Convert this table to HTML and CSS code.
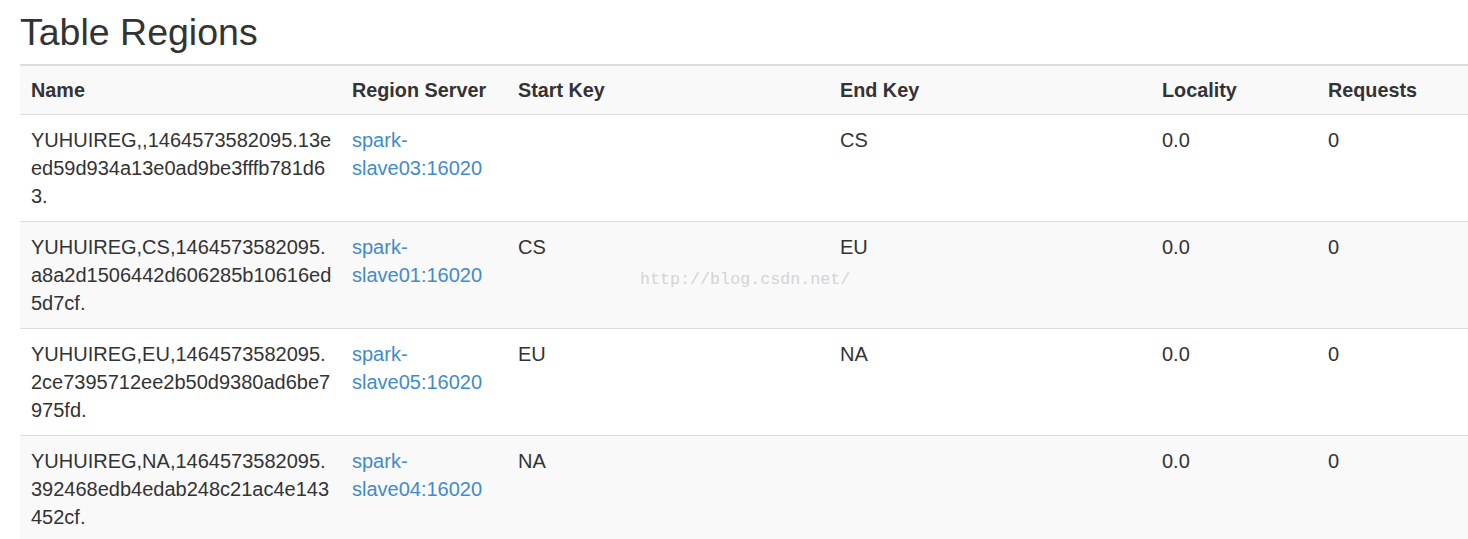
FILE: index.html
```html
<!DOCTYPE html>
<html>
<head>
<meta charset="utf-8">
<title>Table Regions</title>
<link rel="stylesheet" href="styles.css">
</head>
<body>
<div class="page">
  <h1 class="title">Table Regions</h1>
  <table class="regions">
    <colgroup>
      <col class="c-name"><col class="c-rs"><col class="c-key"><col class="c-key"><col class="c-loc"><col class="c-req">
    </colgroup>
    <tr class="head">
      <th>Name</th><th>Region Server</th><th>Start Key</th><th>End Key</th><th>Locality</th><th>Requests</th>
    </tr>
    <tr>
      <td class="name">YUHUIREG,,1464573582095.13e<br>ed59d934a13e0ad9be3fffb781d6<br>3.</td>
      <td><a href="#">spark-slave03:16020</a></td>
      <td></td><td>CS</td><td>0.0</td><td>0</td>
    </tr>
    <tr>
      <td class="name">YUHUIREG,CS,1464573582095.<br>a8a2d1506442d606285b10616ed<br>5d7cf.</td>
      <td><a href="#">spark-slave01:16020</a></td>
      <td>CS</td><td>EU</td><td>0.0</td><td>0</td>
    </tr>
    <tr>
      <td class="name">YUHUIREG,EU,1464573582095.<br>2ce7395712ee2b50d9380ad6be7<br>975fd.</td>
      <td><a href="#">spark-slave05:16020</a></td>
      <td>EU</td><td>NA</td><td>0.0</td><td>0</td>
    </tr>
    <tr>
      <td class="name">YUHUIREG,NA,1464573582095.<br>392468edb4edab248c21ac4e143<br>452cf.</td>
      <td><a href="#">spark-slave04:16020</a></td>
      <td>NA</td><td></td><td>0.0</td><td>0</td>
    </tr>
  </table>
  <div class="watermark">http://blog.csdn.net/</div>
</div>
</body>
</html>
```

FILE: styles.css
```css
html, body {
  margin: 0;
  padding: 0;
  background: #fff;
}
body {
  font-family: "Liberation Sans", Arial, sans-serif;
  color: #333;
  font-size: 20px;
  line-height: 28px;
  overflow: hidden;
}
.page {
  position: relative;
  padding: 12px 0 0 20px;
}
.title {
  margin: 0 0 12px 0;
  font-size: 37.5px;
  line-height: 40px;
  font-weight: 500;
  color: #333;
}
.regions {
  width: 1448px;
  table-layout: fixed;
  border-collapse: collapse;
  border-spacing: 0;
  border-top: 2px solid #ddd;
}
.c-name { width: 321px; }
.c-rs { width: 166px; }
.c-key { width: 322px; }
.c-loc { width: 166px; }
.c-req { width: 151px; }
.regions th {
  text-align: left;
  font-weight: bold;
  font-size: 19.8px;
  padding: 10px 11px;
  vertical-align: top;
}
.regions td {
  padding: 11px;
  border-top: 1px solid #ddd;
  vertical-align: top;
}
.regions td.name {
  white-space: nowrap;
  padding-right: 0;
}
.regions tr:nth-child(odd) {
  background: #f9f9f9;
}
.regions a {
  color: #428bca;
  text-decoration: none;
}
.watermark {
  position: absolute;
  left: 640px;
  top: 270px;
  font-family: "Liberation Mono", "Courier New", monospace;
  font-size: 16.7px;
  line-height: 20px;
  color: #d4d4d4;
}
```
